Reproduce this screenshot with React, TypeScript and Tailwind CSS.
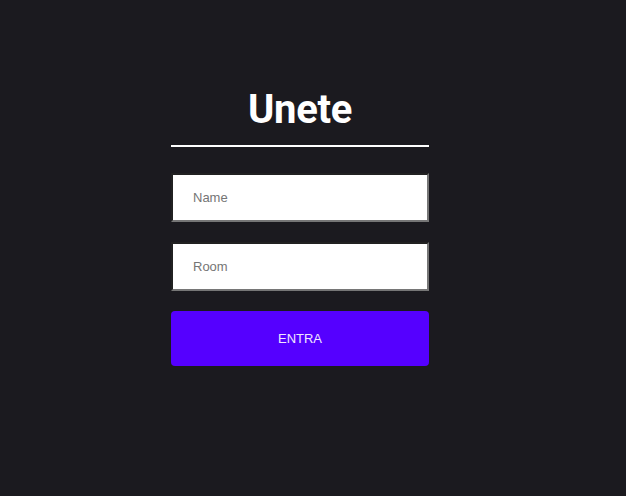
import React from "react";

const App: React.FC = () => {
  return (
    <div className="min-h-[496px] w-full bg-[#1b1a1f] flex justify-center pr-[26px] pt-[86px]">
      <div className="w-[258px] flex flex-col">
        {/* Title */}
        <h1 className="text-center text-white font-bold text-[40px] leading-[48px] font-['Roboto',sans-serif] tracking-[-0.3px]">
          Unete
        </h1>
        <div className="h-[2px] bg-white mt-[11px]" />

        {/* Inputs */}
        <input
          autoFocus
          type="text"
          placeholder="Name"
          className="mt-[26px] h-[49px] w-full bg-white border-2 [border-style:inset] border-[#767676] pl-[20px] text-[13px] text-black placeholder:text-[#757575] font-['Liberation_Sans',Arial,sans-serif] outline-none"
        />
        <input
          type="text"
          placeholder="Room"
          className="mt-[20px] h-[49px] w-full bg-white border-2 [border-style:inset] border-[#767676] pl-[20px] text-[13px] text-black placeholder:text-[#757575] font-['Liberation_Sans',Arial,sans-serif] outline-none"
        />

        {/* Submit */}
        <button className="mt-[20px] h-[55px] w-full rounded-[4px] bg-[#5500ff] text-[#f0e6ff] text-[13px] font-['Liberation_Sans',Arial,sans-serif]">
          ENTRA
        </button>
      </div>
    </div>
  );
};

export default App;
